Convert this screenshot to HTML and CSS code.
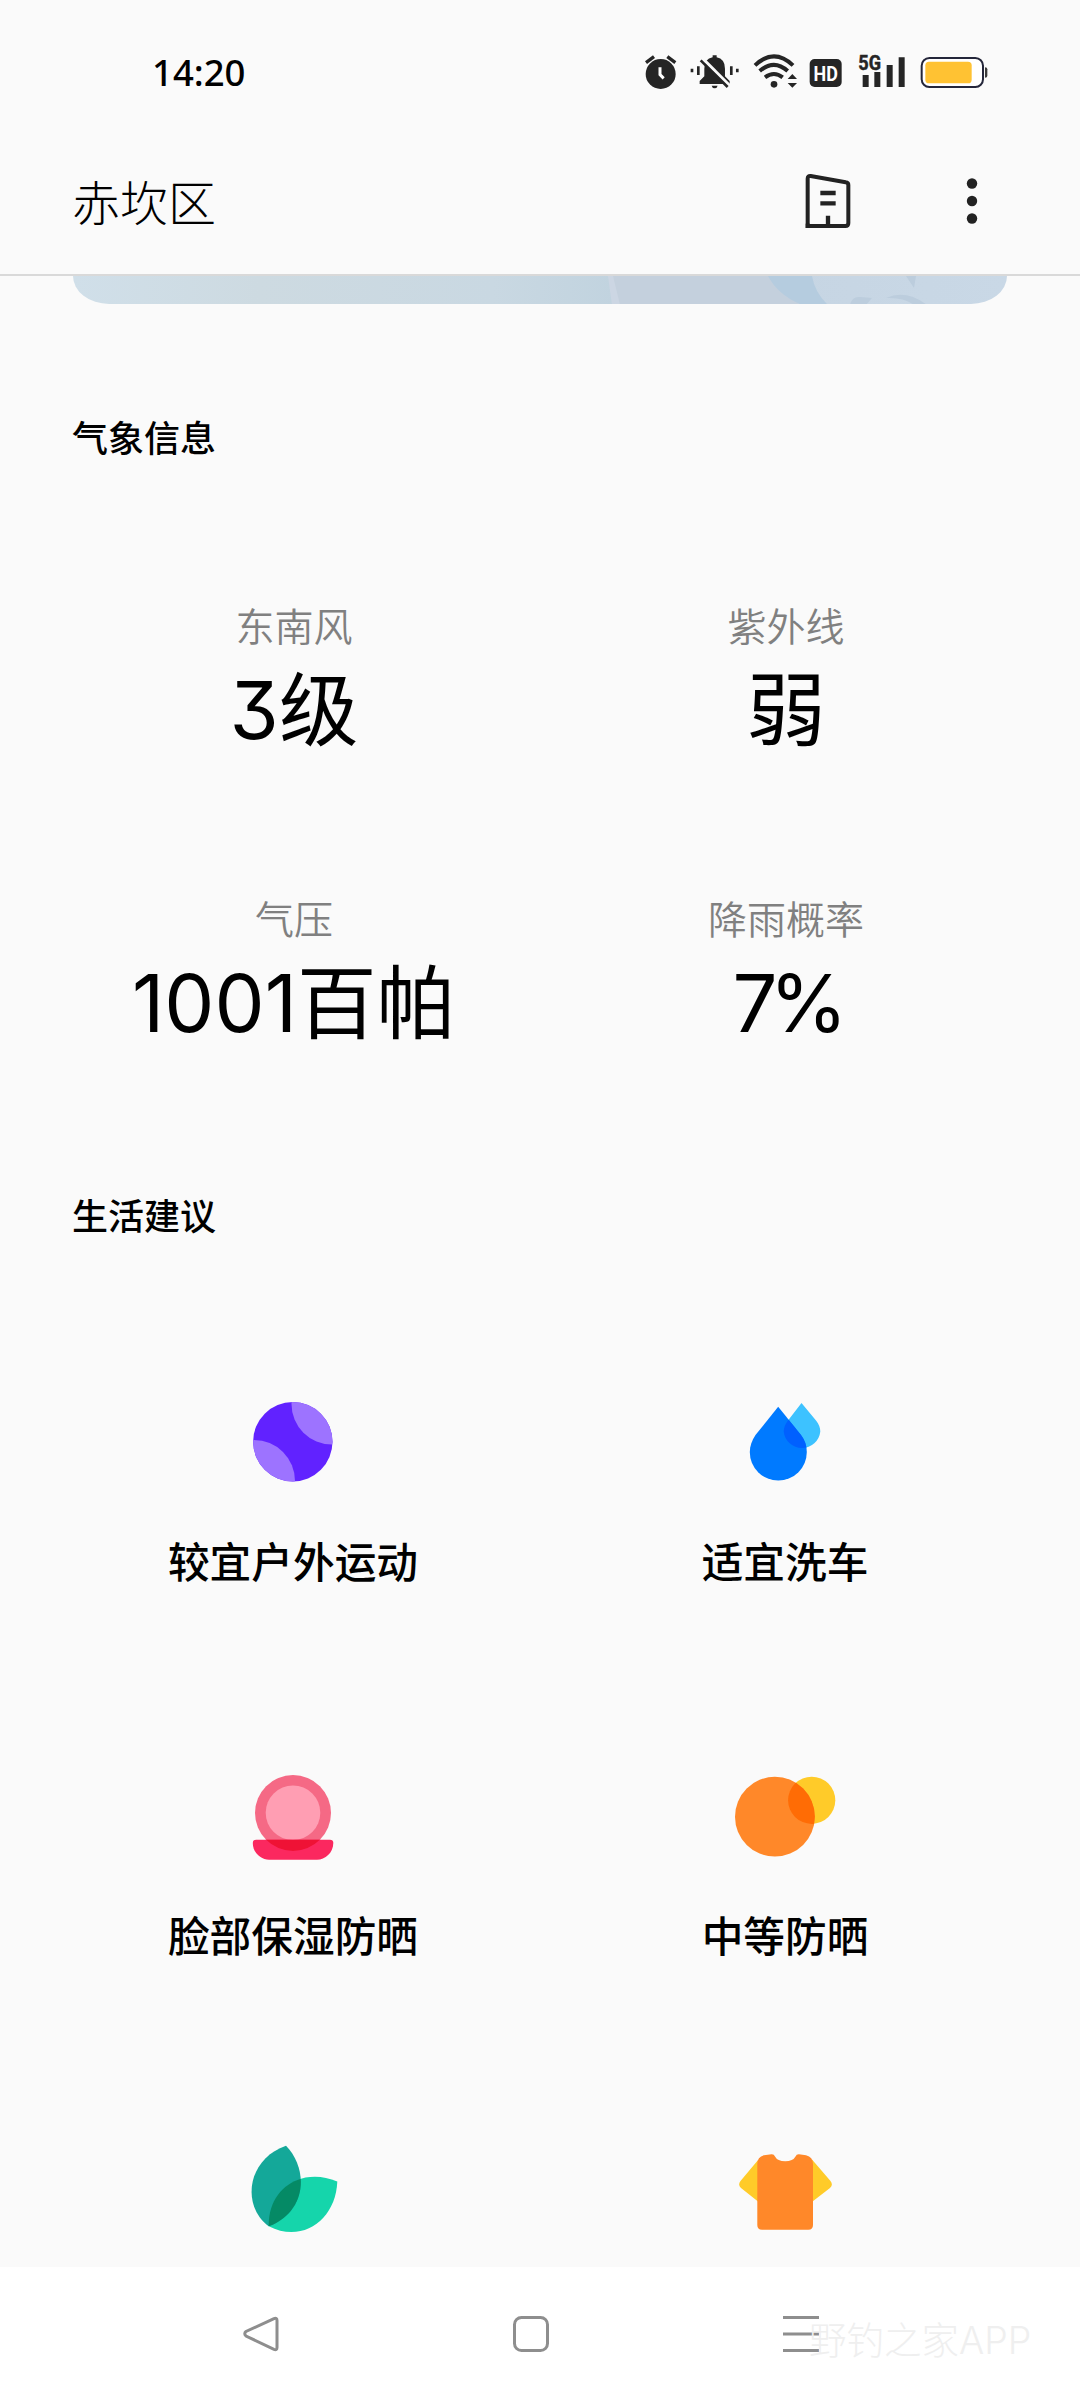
FILE: index.html
```html
<!DOCTYPE html>
<html lang="zh-CN">
<head>
    <meta charset="UTF-8">
    <meta name="viewport" content="width=device-width, initial-scale=1.0">
    <title>赤坎区</title>
    <link rel="stylesheet" href="styles.css">
</head>
<body>
    <div class="status-bar">
        <span class="time">14:20</span>
        <div class="status-icons">
            <svg width="35" height="40" viewBox="70 30 105 120">
                <circle cx="123" cy="102" r="45" fill="#252525"/>
                <path d="M79 68L103 50M143 50L167 68" stroke="#252525" stroke-width="10"/>
                <path d="M121 82V104L132 115" fill="none" stroke="#fff" stroke-width="9"/>
            </svg>
            <svg width="53.3" height="40" viewBox="205 30 160 120">
                <path d="M240 132V123L254 109V86Q254 56 279 52V46H291V52Q316 57 316 86V109L330 123V132ZM276 137H294Q292 145 285 145Q278 145 276 137Z" fill="#252525"/>
                <path d="M249 56L329 136" stroke="#fafafa" stroke-width="10"/>
                <path d="M243 61L324 141" stroke="#252525" stroke-width="8"/>
                <path d="M217 86V97M236 79V105M335 79V105M353 86V97" stroke="#252525" stroke-width="8"/>
            </svg>
            <svg width="46.7" height="40" viewBox="395 30 140 120">
                <path d="M404 76Q461 22 518 76M418 93Q461 56 502 93M434 112Q461 92 487 112" fill="none" stroke="#252525" stroke-width="12"/>
                <circle cx="461" cy="133" r="10" fill="#252525"/>
                <path d="M502 117L516 102L530 117ZM502 129H530L516 143Z" fill="#252525"/>
            </svg>
            <svg width="35" height="40" viewBox="565 30 105 120">
                <rect x="570" y="57" width="96" height="84" rx="15" fill="#252525"/>
                <text x="618" y="122" class="hd-text" textLength="73" lengthAdjust="spacingAndGlyphs">HD</text>
            </svg>
            <svg width="55" height="40" viewBox="700 30 165 120">
                <text x="716" y="90" class="net-text" textLength="68" lengthAdjust="spacingAndGlyphs">5G</text>
                <path d="M729 105H747V141H729ZM764 96H782V141H764ZM801 75H819V141H801ZM837 52H855V141H837Z" fill="#252525"/>
            </svg>
            <svg width="71.7" height="40" viewBox="895 30 215 120">
                <rect x="906" y="54" width="184" height="87" rx="23" fill="#fff" stroke="#24263a" stroke-width="6"/>
                <rect x="917" y="65" width="139" height="65" rx="11" fill="#ffc233"/>
                <path d="M1096 82Q1103 82 1103 88V107Q1103 113 1096 113Z" fill="#3a3a3a"/>
            </svg>
        </div>
    </div>

    <header class="app-bar">
        <h1>赤坎区</h1>
        <svg width="50" height="60" viewBox="129 60 150 180">
            <path d="M143 228V86Q143 77 152 78L257 97Q265 98 265 105V219Q265 228 256 228Z" fill="none" stroke="#222" stroke-width="12"/>
            <path d="M137 221H150V234H137Z" fill="#222"/>
            <path d="M181 129H227M181 160H227M204 197V228" stroke="#222" stroke-width="13"/>
        </svg>
        <svg class="more" width="20" height="60" viewBox="0 0 20 60">
            <circle cx="10" cy="13.5" r="5.2" fill="#222"/>
            <circle cx="10" cy="31" r="5.2" fill="#222"/>
            <circle cx="10" cy="48.5" r="5.2" fill="#222"/>
        </svg>
    </header>

    <main>
        <div class="banner">
            <svg width="934" height="29" viewBox="73 275 934 29">
                <path d="M608 275H770L800 304H614Z" fill="#c4d0dd"/>
                <path d="M608 275H613L620 304H612Z" fill="#ccd6e3"/>
                <path d="M768 275H812Q815 292 828 304H802Q778 294 768 275Z" fill="#b5ccdf"/>
                <path d="M850 304Q852 295 860 296L872 297L866 304ZM906 275H916L914 287ZM886 297Q906 288 927 304H914Q904 296 886 297Z" fill="#bccddd"/>
            </svg>
        </div>

        <h2>气象信息</h2>
        <div class="weather-grid">
            <div class="weather-item">
                <p class="label">东南风</p>
                <p class="value">3级</p>
            </div>
            <div class="weather-item">
                <p class="label">紫外线</p>
                <p class="value">弱</p>
            </div>
            <div class="weather-item">
                <p class="label">气压</p>
                <p class="value">1001百帕</p>
            </div>
            <div class="weather-item">
                <p class="label">降雨概率</p>
                <p class="value percent">7%</p>
            </div>
        </div>

        <h2 class="life-title">生活建议</h2>
        <div class="life-grid">
            <div class="life-item">
                <svg width="120" height="120" viewBox="0 0 120 120">
                    <clipPath id="ball"><circle cx="58.8" cy="59.7" r="39.7"/></clipPath>
                    <g clip-path="url(#ball)">
                        <rect width="120" height="120" fill="#6122ff"/>
                        <circle cx="98" cy="22" r="40.5" fill="#9d73ff"/>
                        <circle cx="20" cy="99" r="41" fill="#9d73ff"/>
                    </g>
                </svg>
                <p>较宜户外运动</p>
            </div>
            <div class="life-item">
                <svg width="120" height="120" viewBox="0 0 120 120">
                    <clipPath id="drop"><path d="M52.2 24.7L75 53C79 58 80.8 64 80.8 70A28.5 28.5 0 0 1 23.8 70C23.8 64 26 58 29.5 53Z"/></clipPath>
                    <path d="M75.5 21L90 38.5C93 42 94.3 46 94.3 49.5A18.4 18.4 0 0 1 57.7 49.5C57.7 46 59.5 41.5 62 38.5Z" fill="#3dc2ff"/>
                    <g clip-path="url(#drop)">
                        <rect width="120" height="120" fill="#007aff"/>
                        <path d="M75.5 21L90 38.5C93 42 94.3 46 94.3 49.5A18.4 18.4 0 0 1 57.7 49.5C57.7 46 59.5 41.5 62 38.5Z" fill="#0060ff"/>
                    </g>
                </svg>
                <p>适宜洗车</p>
            </div>
            <div class="life-item">
                <svg width="120" height="120" viewBox="0 0 120 120">
                    <clipPath id="base"><path d="M22 83.7H96Q99.3 83.7 99.3 87C99.3 97 91 103.7 83 103.7H35C27 103.7 18.8 97 18.8 87Q18.8 83.7 22 83.7Z"/></clipPath>
                    <circle cx="59" cy="57" r="38" fill="#f56985"/>
                    <circle cx="59" cy="56.8" r="27.3" fill="#ff9eb3"/>
                    <g clip-path="url(#base)">
                        <rect width="120" height="120" fill="#fb285f"/>
                        <circle cx="59" cy="57" r="38" fill="#ef1235"/>
                    </g>
                </svg>
                <p>脸部保湿防晒</p>
            </div>
            <div class="life-item">
                <svg width="120" height="120" viewBox="0 0 120 120">
                    <clipPath id="sun"><circle cx="48.9" cy="60.7" r="39.9"/></clipPath>
                    <circle cx="85.7" cy="44.3" r="23.6" fill="#ffcb29"/>
                    <g clip-path="url(#sun)">
                        <rect width="120" height="120" fill="#ff8829"/>
                        <circle cx="85.7" cy="44.3" r="23.6" fill="#ff6c05"/>
                    </g>
                </svg>
                <p>中等防晒</p>
            </div>
            <div class="life-item">
                <svg width="120" height="120" viewBox="0 0 120 120">
                    <clipPath id="leaf"><path d="M52 15.7C74 38 74 81 34.7 96.3C7 76 13 29 52 15.7Z"/></clipPath>
                    <path d="M34.7 96.3C34 57 69 37 103.3 51.5C102 89 69 114 34.7 96.3Z" fill="#15d5ab"/>
                    <g clip-path="url(#leaf)">
                        <rect width="120" height="120" fill="#14a899"/>
                        <path d="M34.7 96.3C34 57 69 37 103.3 51.5C102 89 69 114 34.7 96.3Z" fill="#058a65"/>
                    </g>
                </svg>
            </div>
            <div class="life-item">
                <svg width="120" height="120" viewBox="0 0 120 120">
                    <path d="M32.5 29.5L14.5 51Q11.5 55 15 58L32 71.5ZM86 29.5L104.5 51Q107.5 55 104 58L86.5 71.5Z" fill="#ffcb29"/>
                    <path d="M38 25.2L45.5 24.2Q48 24 49 26.5Q51.5 31.3 59.2 31.3Q67 31.3 69.5 26.5Q70.5 24 73 24.2L80 25.2Q87 27 87 34V95Q87 99.7 82.3 99.7H36Q31.3 99.7 31.3 95V34Q31.3 27 38 25.2Z" fill="#ff8829"/>
                </svg>
            </div>
        </div>
    </main>

    <nav class="nav-bar">
        <svg width="36" height="36" viewBox="0 0 36 36">
            <path d="M31 2.6L3 15.5Q0.5 17.5 3 20L31 33.4Q34 34.5 34 31.5V4.5Q34 1.5 31 2.6Z"/>
        </svg>
        <svg width="36" height="36" viewBox="0 0 36 36">
            <rect x="1.5" y="1.5" width="33" height="33" rx="7"/>
        </svg>
        <svg width="36" height="36" viewBox="0 0 36 36">
            <path d="M0 1.5H36M0 18H36M0 34.5H36"/>
        </svg>
        <span class="watermark">野钓之家APP</span>
    </nav>
</body>
</html>
```
FILE: styles.css
```css
* {
    box-sizing: border-box;
}

body {
    display: flex;
    flex-direction: column;
    width: 1080px;
    height: 2400px;
    margin: 0;
    overflow: hidden;
    background: #fafafa;
    color: #000;
    font-family: Inter, "Noto Sans CJK SC", sans-serif;
}

h1, h2, p {
    margin: 0;
    font-weight: 400;
}

svg {
    display: block;
    flex: none;
}

.status-bar {
    display: flex;
    flex: none;
    justify-content: space-between;
    height: 126px;
    padding: 49px 90px 0 152px;
}

.time {
    font-family: "Noto Sans", sans-serif;
    font-size: 36.5px;
    font-weight: 500;
    line-height: 46px;
}

.status-icons {
    display: flex;
    gap: 10px;
    padding-top: 1px;
}

.hd-text {
    fill: #fff;
    font: bold 62px Roboto, sans-serif;
    text-anchor: middle;
}

.net-text {
    fill: #252525;
    stroke: #252525;
    stroke-width: 1.5px;
    font: bold 60px Roboto, sans-serif;
}

.app-bar {
    display: flex;
    flex: none;
    height: 150px;
    padding: 44px 98px 0 72px;
    border-bottom: 2px solid #d9d9d9;
}

.app-bar h1 {
    flex: 1;
    padding-top: 1px;
    font-size: 48px;
    font-weight: 300;
    line-height: 66px;
}

.more {
    margin-left: 109px;
}

main {
    flex: 1;
    min-height: 0;
    overflow: hidden;
}

.banner {
    height: 28px;
    margin: 0 73px;
    overflow: hidden;
    border-radius: 0 0 36px 36px / 0 0 28px 28px;
    background: linear-gradient(90deg, #d0dfe9, #cddae1 20%, #c9d8e2 45%, #c1d3df 58%, #c6d5e3 75%, #c9d8e6);
}

h2 {
    margin: 109px 0 0 72px;
    font-size: 36px;
    font-weight: 500;
    line-height: 52px;
}

.weather-grid {
    display: grid;
    grid-template-columns: 492px 492px;
    grid-auto-rows: 293px;
    margin: 132px 48px 0;
}

.weather-item {
    text-align: center;
}

.label {
    color: #808080;
    font-size: 39px;
    font-weight: 350;
    line-height: 60px;
}

.value {
    font-size: 79.5px;
    font-weight: 400;
    font-feature-settings: "cv09";
    line-height: 106px;
}

.percent {
    letter-spacing: -8px;
}

.life-title {
    margin-top: 8px;
}

.life-grid {
    display: grid;
    grid-template-columns: 492px 492px;
    grid-auto-rows: 374px;
    margin: 139px 48px 0;
}

.life-item {
    display: flex;
    flex-direction: column;
    align-items: center;
}

.life-item p {
    margin-top: 30px;
    padding-right: 2px;
    font-size: 41.7px;
    font-weight: 500;
    line-height: 62px;
}

.nav-bar {
    position: relative;
    display: flex;
    flex: none;
    gap: 234px;
    height: 133px;
    padding: 49px 0 0 243px;
    background: #fff;
}

.nav-bar svg {
    fill: none;
    stroke: #8e8e8e;
    stroke-width: 3;
}

.watermark {
    position: absolute;
    top: 47px;
    left: 809px;
    color: #efefef;
    font-size: 37.5px;
    font-weight: 300;
    line-height: 54px;
}
```
